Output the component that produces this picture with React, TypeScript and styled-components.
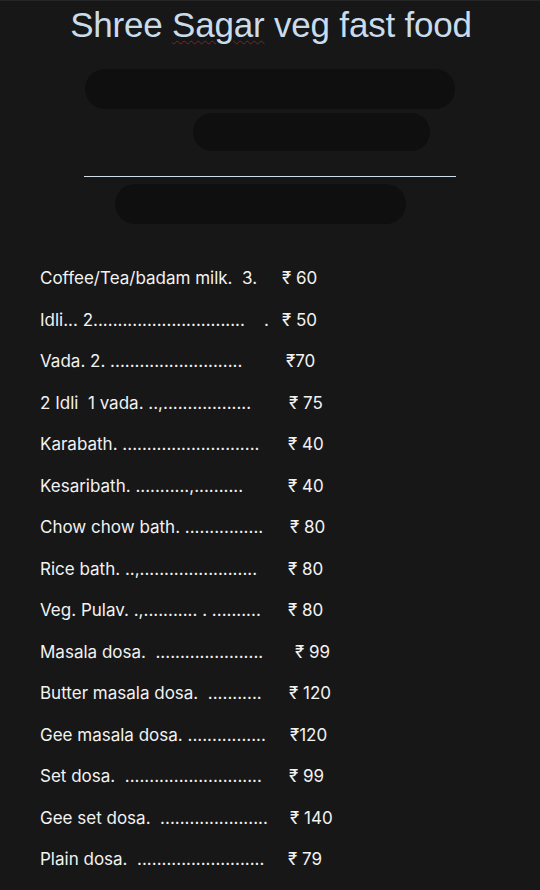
import React from 'react';
import styled, { createGlobalStyle } from 'styled-components';

const Global = createGlobalStyle`
  html, body { margin: 0; padding: 0; background: #171717; }
  body { width: 540px; height: 890px; overflow: hidden; }
`

const Page = styled.div`
  width: 540px;
  height: 890px;
  background: #171717;
  font-family: Inter, "Liberation Sans", "DejaVu Sans", sans-serif;
  color: #f2f2f2;
  box-sizing: border-box;
  padding-top: 2px;
  border-top: 1px solid #262626;
`

const Title = styled.h1`
  margin: 0;
  padding-left: 2px;
  text-align: center;
  font-family: "Liberation Sans", Arial, sans-serif;
  font-weight: 400;
  font-size: 35px;
  line-height: 44px;
  color: #c9dcec;
  letter-spacing: -0.2px;
`

const Header = styled.div`
  display: flex;
  flex-direction: column;
  align-items: flex-start;
  padding-top: 22px;
`

const Blot = styled.div<{ $left: number; $width: number; $height: number; $top: number }>`
  margin-left: ${p => p.$left}px;
  margin-top: ${p => p.$top}px;
  width: ${p => p.$width}px;
  height: ${p => p.$height}px;
  border-radius: ${p => p.$height / 2}px;
  background: #0f0f0f;
`

const Rule = styled.div`
  margin: 25px 0 0 84px;
  width: 372px;
  height: 1px;
  background: #cfdde9;
`

const Menu = styled.ul`
  list-style: none;
  margin: 44px 0 0;
  padding: 0 0 0 40px;
`

const Row = styled.li`
  display: flex;
  align-items: baseline;
  height: 41.5px;
  font-size: 17px;
  line-height: 20px;
  white-space: pre;
`

const Name = styled.span`
  width: 242px;
  flex: none;
  overflow: hidden;
`

const Price = styled.span<{ $shift: number }>`
  padding-left: ${p => p.$shift}px;
`

const Typo = styled.span`
  text-decoration: underline wavy rgba(190, 50, 60, 0.55);
  text-decoration-thickness: 1px;
  text-underline-offset: 3px;
`

type Item = { name: React.ReactNode; price: string; shift: number };

const items: Item[] = [
  { name: <>Coffee/Tea/<Typo>badam</Typo> milk.  3.</>, price: '₹ 60', shift: 0 },
  { name: <><Typo>Idli</Typo>... 2...............................    .</>, price: '₹ 50', shift: 0 },
  { name: <><Typo>Vada</Typo>. 2. ...........................</>, price: '₹70', shift: 4 },
  { name: <>2 <Typo>Idli</Typo>  1 <Typo>vada</Typo>. ..,..................</>, price: '₹ 75', shift: 7 },
  { name: <><Typo>Karabath</Typo>. ............................</>, price: '₹ 40', shift: 6 },
  { name: <><Typo>Kesaribath</Typo>. ...........,..........</>, price: '₹ 40', shift: 6 },
  { name: <>Chow <Typo>chow</Typo> bath. ................</>, price: '₹ 80', shift: 8 },
  { name: <>Rice bath. ..,........................</>, price: '₹ 80', shift: 6 },
  { name: <>Veg. <Typo>Pulav</Typo>. .,........... . ..........</>, price: '₹ 80', shift: 6 },
  { name: <>Masala <Typo>dosa</Typo>.  ......................</>, price: '₹ 99', shift: 13 },
  { name: <>Butter masala <Typo>dosa</Typo>.  ...........</>, price: '₹ 120', shift: 7 },
  { name: <>Gee masala <Typo>dosa</Typo>. ................</>, price: '₹120', shift: 8 },
  { name: <>Set <Typo>dosa</Typo>.  ............................</>, price: '₹ 99', shift: 7 },
  { name: <>Gee set <Typo>dosa</Typo>.  ......................</>, price: '₹ 140', shift: 8 },
  { name: <>Plain <Typo>dosa</Typo>.  ..........................</>, price: '₹ 79', shift: 6 },
];

const App = () => {
  return (
    <Page>
      <Global />
      <Title>Shree <Typo>Sagar</Typo> veg fast food</Title>
      <Header>
        <Blot $left={85} $top={0} $width={370} $height={40} />
        <Blot $left={193} $top={4} $width={237} $height={38} />
        <Rule />
        <Blot $left={115} $top={7} $width={291} $height={40} />
      </Header>
      <Menu>
        {items.map((it, i) => (
          <Row key={i}>
            <Name>{it.name}</Name>
            <Price $shift={it.shift}>{it.price}</Price>
          </Row>
        ))}
      </Menu>
    </Page>
  );
}

export default App;
